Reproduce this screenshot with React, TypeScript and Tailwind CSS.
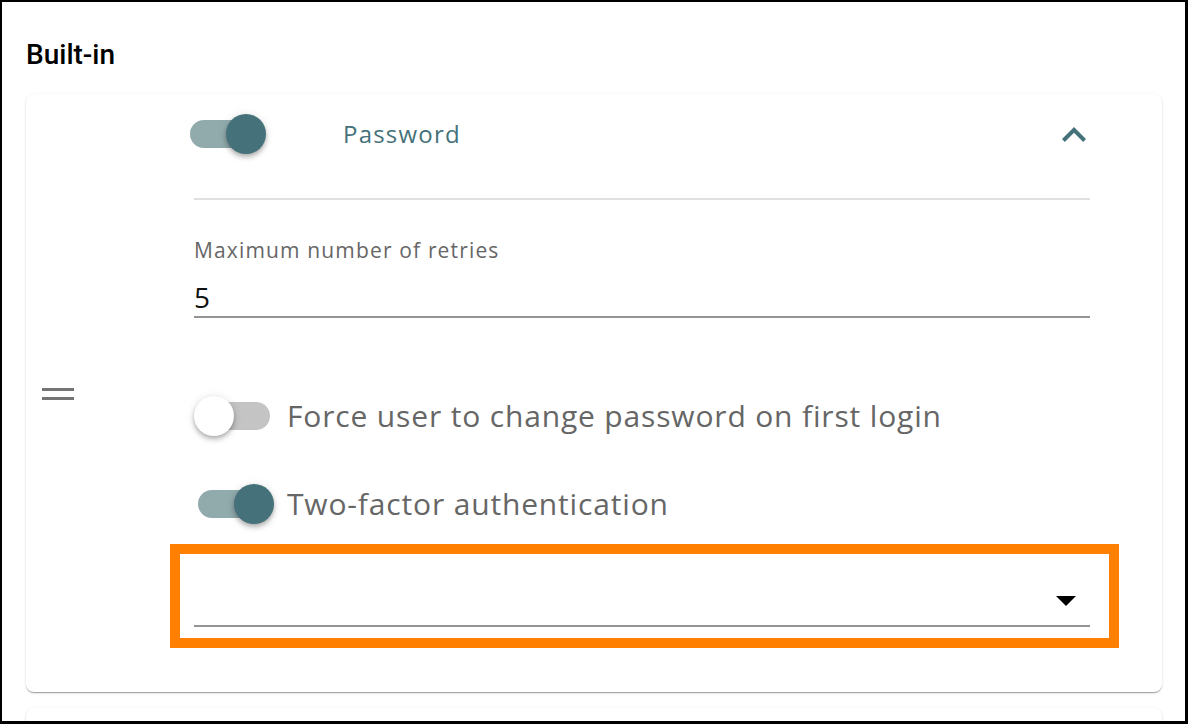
import React from "react";

const teal = "#45727a";

function Toggle({ on }: { on: boolean }) {
  return (
    <div className="relative w-[72px] h-[28px] shrink-0">
      <div
        className={
          on
            ? "w-full h-full rounded-full bg-[#91aaac]"
            : "w-full h-full rounded-full bg-[#c4c4c4]"
        }
      />
      <div
        className={
          on
            ? "absolute top-[-6px] right-[-4px] w-[40px] h-[40px] rounded-full bg-[#45727a] shadow-[0_2px_4px_-1px_rgba(0,0,0,0.2),0_4px_5px_0_rgba(0,0,0,0.14),0_1px_10px_0_rgba(0,0,0,0.12)]"
            : "absolute top-[-6px] left-[-4px] w-[40px] h-[40px] rounded-full bg-white shadow-[0_2px_4px_-1px_rgba(0,0,0,0.2),0_4px_5px_0_rgba(0,0,0,0.14),0_1px_10px_0_rgba(0,0,0,0.12)]"
        }
      />
    </div>
  );
}

export default function App() {
  return (
    <div className="w-[1188px] h-[724px] overflow-hidden bg-white border-l-2 border-t-2 border-r-[3px] border-b-[3px] border-black font-['Open_Sans','Lato',sans-serif]">
      {/* Heading */}
      <div className="pl-[24px] pt-[35px] h-[92px]">
        <h2 className="font-['Roboto',sans-serif] font-medium text-[28px] leading-[36px] text-black">
          Built-in
        </h2>
      </div>

      {/* Card */}
      <div className="ml-[24px] w-[1136px] h-[598px] rounded-[8px] bg-white shadow-[0_2px_1px_-1px_rgba(0,0,0,0.2),0_1px_1px_0_rgba(0,0,0,0.14),0_1px_3px_0_rgba(0,0,0,0.12)] flex">
        {/* drag handle */}
        <div className="w-[168px] shrink-0 flex items-center pl-[16px]">
          <div className="flex flex-col gap-[6px] mt-[2px]">
            <div className="w-[32px] h-[3px] bg-[#757575]" />
            <div className="w-[32px] h-[3px] bg-[#757575]" />
          </div>
        </div>

        {/* content */}
        <div className="w-[896px] flex flex-col">
          <div className="h-[80px] flex items-center">
            <div className="-ml-[4px]">
              <Toggle on />
            </div>
            <span className="ml-[81px] text-[24px] leading-[30px] tracking-[0.05em] text-[#45727a]">
              Password
            </span>
            <svg
              className="ml-auto mr-[4px]"
              width="24"
              height="15"
              viewBox="6 8 12 7.41"
              fill={teal}
            >
              <path d="M12 8l-6 6 1.41 1.41L12 10.83l4.59 4.58L18 14z" />
            </svg>
          </div>

          <div className="mt-[24px] h-[2px] bg-[#e0e0e0]" />

          <label className="mt-[38px] text-[21px] leading-[24px] tracking-[0.055em] text-[#666666]">
            Maximum number of retries
          </label>
          <div className="mt-[18px] h-[38px] border-b-2 border-[#949494] text-[28px] leading-[34px] text-[#111111]">
            5
          </div>

          <div className="mt-[74px] h-[48px] flex items-center pl-[4px]">
            <Toggle on={false} />
            <span className="ml-[17px] text-[30px] leading-[36px] tracking-[0.028em] text-[#666666]">
              Force user to change password on first login
            </span>
          </div>

          <div className="mt-[40px] h-[48px] flex items-center pl-[4px]">
            <Toggle on />
            <span className="ml-[17px] text-[30px] leading-[36px] tracking-[0.028em] text-[#666666]">
              Two-factor authentication
            </span>
          </div>

          {/* highlighted select */}
          <div className="mt-[16px] -ml-[24px] w-[949px] h-[104px] border-[10px] border-[#ff8000] pl-[14px] pr-[19px] pt-[22px]">
            <div className="h-[51px] border-b-2 border-[#949494] flex items-center justify-end pr-[14px]">
              <svg width="20" height="10" viewBox="7 10 10 5" fill="#000">
                <path d="M7 10l5 5 5-5z" />
              </svg>
            </div>
          </div>
        </div>
      </div>

      {/* Next card */}
      <div className="mt-[16px] ml-[24px] w-[1136px] h-[40px] rounded-[8px] bg-white shadow-[0_2px_1px_-1px_rgba(0,0,0,0.2),0_1px_1px_0_rgba(0,0,0,0.14),0_1px_3px_0_rgba(0,0,0,0.12)]" />
    </div>
  );
}
